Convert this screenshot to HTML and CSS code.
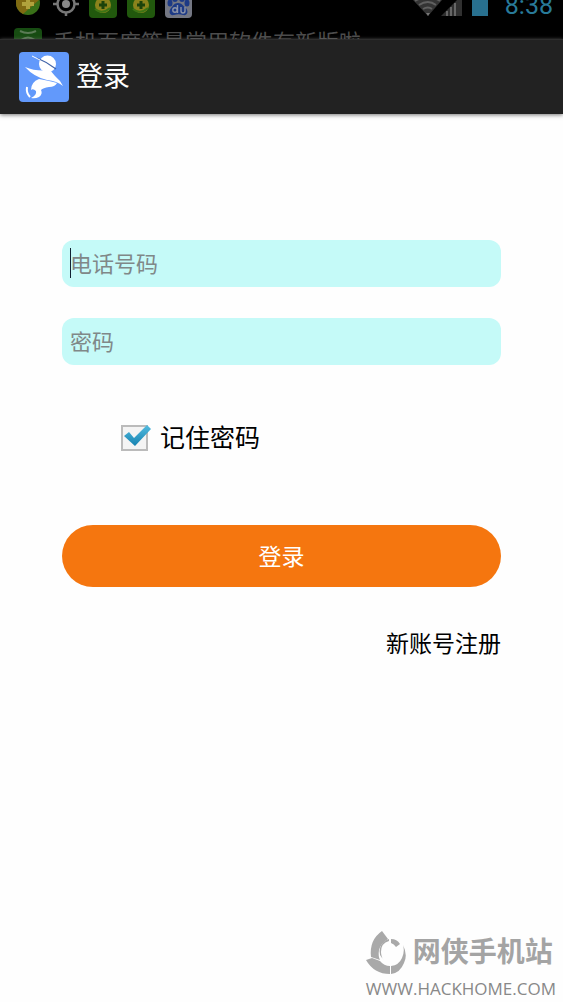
FILE: index.html
```html
<!DOCTYPE html>
<html lang="zh-CN">
<head>
<meta charset="utf-8">
<meta name="viewport" content="width=device-width, initial-scale=1">
<title>登录</title>
<link rel="stylesheet" href="styles.css">
</head>
<body>
<div class="status">
  <div class="status-row">
    <svg class="tray" width="184" height="20" viewBox="0 0 184 20" aria-hidden="true">
      <circle cx="20" cy="3" r="12" fill="#397018"/>
      <path d="M8 2a12 12 0 0 0 7 12L31 0H8z" fill="#806a12"/>
      <path d="M20-2V9M14 4h12" stroke="#b0a23c" stroke-width="4"/>
      <g fill="none" stroke="#777" stroke-width="2.5">
        <circle cx="58" cy="4" r="8.5"/>
        <path d="M45 4h5M66 4h5M58 12v4"/>
      </g>
      <circle cx="58" cy="4" r="4" fill="#888"/>
      <rect x="81" y="-10" width="28" height="28" rx="4" fill="#21580d"/>
      <rect x="119" y="-10" width="28" height="28" rx="4" fill="#21580d"/>
      <g fill="#8a831c">
        <circle cx="95" cy="5" r="8"/>
        <circle cx="133" cy="5" r="8"/>
      </g>
      <path d="M87 9Q94 15 102 8M125 9Q132 15 140 8" fill="none" stroke="#3c7415" stroke-width="2"/>
      <path d="M95 1v8M91 5h8M133 1v8M129 5h8" stroke="#1c430b" stroke-width="3"/>
      <rect x="157" y="-10" width="27" height="28" rx="4" fill="#747783"/>
      <g fill="#1d3a86">
        <ellipse cx="162" cy="3" rx="2.500" ry="3.500"/>
        <ellipse cx="179" cy="3" rx="2.500" ry="3.500"/>
        <ellipse cx="167" cy="-2" rx="3" ry="4"/>
        <ellipse cx="174" cy="-2" rx="3" ry="4"/>
        <path d="M170 3c-4 0-5 3-7 5-3 4-1 8 3 7 3-1 6-1 9 0 4 1 6-3 3-7-3-2-4-5-8-5z"/>
      </g>
      <g fill="none" stroke="#8c93a8" stroke-width="1.4">
        <circle cx="167" cy="10" r="2.200"/>
        <path d="M169.500 5v8M173 7v4q0 2 2 2t2-2V7"/>
      </g>
    </svg>
    <svg class="signal" width="76" height="20" viewBox="0 0 76 20" aria-hidden="true">
      <path d="M0 0h29L15 16z" fill="#343434"/>
      <g fill="none" stroke="#606060" stroke-width="2">
        <path d="M2 1Q15-7 27 1M6 5Q15-1 23 5M10 9Q15 6 19 9"/>
      </g>
      <path d="M13 13h4l-2 3z" fill="#777"/>
      <path d="M28 16L44 0h5v16z" fill="#303030"/>
      <path d="M34 16v-5M38 16V7M42 16V3" stroke="#666" stroke-width="2"/>
      <rect x="59" y="-4" width="16" height="20" fill="#28708f"/>
    </svg>
    <span class="clock">8:38</span>
  </div>
  <div class="notice">
    <svg width="28" height="14" viewBox="0 0 28 14" aria-hidden="true">
      <rect width="28" height="28" rx="4" fill="#174c12"/>
      <path d="M6 3Q14 7 22 3M5 14Q14 5 23 14" fill="none" stroke="#5b7b55" stroke-width="2"/>
    </svg>
    <span class="notice-text">手机百度等最常用软件有新版啦</span>
  </div>
</div>
<header class="bar">
  <svg class="logo" width="50" height="50" viewBox="0 0 50 50" aria-hidden="true">
    <rect width="50" height="50" rx="4" fill="#6299fb"/>
    <circle cx="28.500" cy="12" r="8.500" fill="#fff"/>
    <path d="M18 6Q28 10 37 17" fill="none" stroke="#3f62a8" stroke-width="1.200"/>
    <path d="M13 4l8 4" stroke="#fff" stroke-width="1"/>
    <path d="M6 15Q18 20 31 18L36 24Q41 28 44 34Q38 29 28 28Q15 25 6 15z" fill="#fff"/>
    <path d="M20 27Q31 29 38 31Q36 35 30 35Q24 36 22 38Q24 42 20 45Q16 47 12 46Q18 43 17 39Q14 36 12 38Q12 30 20 27z" fill="#fff"/>
    <path d="M8 35Q7 41 11 45" fill="none" stroke="#fff" stroke-width="2"/>
  </svg>
  <h1>登录</h1>
</header>
<main>
  <form class="login">
    <div class="field">
      <input class="text" type="tel" placeholder="电话号码" aria-label="电话号码">
      <span class="caret"></span>
    </div>
    <div class="field">
      <input class="text" type="password" placeholder="密码" aria-label="密码">
    </div>
    <label class="remember">
      <span class="tick">
        <input type="checkbox" checked>
        <svg width="32" height="32" viewBox="0 0 32 32" aria-hidden="true">
          <defs><linearGradient id="blue" x1="0" y1="0" x2="0" y2="1"><stop stop-color="#54bce0"/><stop offset="1" stop-color="#1682b0"/></linearGradient></defs>
          <path d="M4 13l5-4 5 6L27 2l4 4L15 23z" fill="url(#blue)"/>
        </svg>
      </span>
      <span>记住密码</span>
    </label>
    <button class="submit" type="button">登录</button>
    <a class="register" href="#">新账号注册</a>
  </form>
</main>
<footer class="mark">
  <div class="mark-name">
    <svg width="40" height="44" viewBox="0 0 40 44" aria-hidden="true">
      <g fill="#a9a9a9">
        <path d="M16 0L22 8Q15 12 13 19Q12 25 14 29L5 26Q3 9 16 0z"/>
        <path d="M0 29l6-2 8 3q4 5 10 5v8Q8 43 0 29z"/>
        <path d="M25 35q8-1 11-8 3-7 1-13 5 10 1 18-4 10-13 11z"/>
        <path d="M25 8Q31 8 34 13l-4 3q-2-3-5-4zM23 8v2q-8 2-8 11 0 5 3 8-6-5-4-12 2-7 9-9z"/>
      </g>
    </svg>
    <span>网侠手机站</span>
  </div>
  <div class="mark-url">WWW.HACKHOME.COM</div>
</footer>
</body>
</html>
```
FILE: styles.css
```css
* {
  box-sizing: border-box;
}

body {
  margin: 0;
  min-height: 100vh;
  display: flex;
  flex-direction: column;
  background: #fefefe;
  color: #000;
  font-family: Roboto, "Noto Sans CJK SC", sans-serif;
}

svg {
  display: block;
  flex: none;
}

.status {
  background: #000;
  overflow: hidden;
}

.status-row {
  height: 24px;
  display: flex;
  align-items: flex-start;
  padding: 0 10px 0 8px;
}

.signal {
  margin-left: auto;
}

.clock {
  margin: -8px 0 0 16px;
  color: #287a99;
  font-size: 25px;
  line-height: 28px;
}

.notice {
  height: 15px;
  display: flex;
  gap: 11px;
  padding: 4px 0 0 14px;
  color: #4c4c4c;
  font-size: 22px;
  line-height: 30px;
}

.bar {
  display: flex;
  align-items: center;
  gap: 7px;
  height: 75px;
  padding: 0 19px;
  background: #222;
  border-top: 1px solid #2e2e2e;
  box-shadow: 0 1px 4px #777;
}

.bar h1 {
  margin: 0;
  color: #fff;
  font-size: 27px;
  font-weight: 400;
  line-height: 40px;
}

main {
  flex: 1;
  padding: 126px 62px 0;
}

.login {
  display: flex;
  flex-direction: column;
}

.field {
  position: relative;
  margin-bottom: 31px;
}

.text {
  display: block;
  width: 100%;
  height: 47px;
  padding: 2px 8px 0;
  border: 0;
  border-radius: 12px;
  background: #c5faf8;
  color: #222;
  font: inherit;
  font-size: 22px;
}

.text::placeholder {
  color: #808888;
}

.caret {
  position: absolute;
  top: 8px;
  left: 8px;
  width: 1px;
  height: 30px;
  background: #123;
}

.remember {
  display: flex;
  align-self: flex-start;
  align-items: center;
  gap: 8px;
  margin: 23px 0 0 58px;
  font-size: 25px;
  line-height: 40px;
}

.tick {
  position: relative;
  width: 32px;
  height: 32px;
  padding: 2px 0 0 1px;
}

.tick input {
  display: block;
  appearance: none;
  width: 27px;
  height: 26px;
  margin: 0;
  border: 2px solid #bbb;
  background: #f4f4f4;
}

.tick svg {
  position: absolute;
  inset: 0;
  visibility: hidden;
}

.tick input:checked + svg {
  visibility: visible;
}

.submit {
  height: 62px;
  margin-top: 66px;
  padding: 0 0 2px;
  border: 0;
  border-radius: 31px;
  background: #f5760f;
  color: #fff;
  font: inherit;
  font-size: 23px;
}

.register {
  align-self: flex-end;
  margin-top: 42px;
  color: #000;
  font-size: 23px;
  line-height: 32px;
  text-decoration: none;
}

.mark {
  align-self: flex-end;
  padding-right: 7px;
  color: #a4a4a4;
}

.mark-name {
  display: flex;
  align-items: center;
  gap: 7px;
  font-size: 28px;
  font-weight: 700;
  line-height: 46px;
}

.mark-url {
  color: #888;
  font-family: "Open Sans", sans-serif;
  font-size: 17px;
  line-height: 26px;
  text-align: right;
}
```
